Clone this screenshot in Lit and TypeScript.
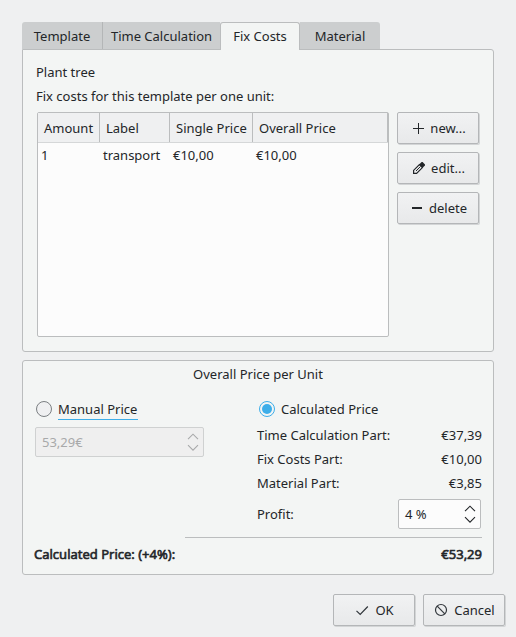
import { LitElement, html, css, svg } from "lit";
import { customElement, state } from "lit/decorators.js";
import { classMap } from "lit/directives/class-map.js";

const icons = {
  plus: svg`<path d="M8.5 3v11M3 8.5h11" stroke="#232629" />`,
  pencil: svg`<path d="M2.6 13.4V10.4L8.4 4.6L11.4 7.6L5.6 13.4Z" fill="none" stroke="#232629" stroke-width="1.2"/><path d="M5 11L9.4 6.6" stroke="#232629" stroke-width="1"/><path d="M8.2 4.4L10.6 2H11.6L14 4.4V5.4L11.6 7.8Z" fill="#232629"/>`,
  minus: svg`<path d="M3 8h10" stroke="#232629" stroke-width="2" />`,
  check: svg`<path d="M2.5 8.8l3.7 3.7L13.8 4.5" fill="none" stroke="#31363b" stroke-width="1.2" />`,
  cancel: svg`<circle cx="8" cy="8" r="5.5" fill="none" stroke="#31363b" stroke-width="1.2"/><path d="M4.2 4.2l7.6 7.6" stroke="#31363b" stroke-width="1.2"/>`,
};

const icon = (name: keyof typeof icons) =>
  html`<svg width="16" height="16" viewBox="0 0 16 16">${icons[name]}</svg>`;

@customElement("spin-box")
class SpinBox extends LitElement {
  static properties = { value: {}, disabled: { type: Boolean, reflect: true } };
  declare value: string;
  declare disabled: boolean;
  static styles = css`
    :host {
      box-sizing: border-box;
      display: flex;
      align-items: center;
      justify-content: space-between;
      height: 30px;
      padding: 0 4px 0 6px;
      border: 1px solid #bbbdbe;
      border-radius: 2px;
      background: #fcfcfc;
      color: #232629;
    }
    :host([disabled]) {
      background: #efefef;
      border-color: #cfd1d1;
      color: #a8a9aa;
    }
    svg {
      display: block;
      fill: none;
      stroke: currentColor;
      stroke-width: 1.1;
    }
  `;
  render() {
    return html`<span>${this.value}</span>
      <svg width="12" height="20" viewBox="0 0 12 20">
        <path d="M1 7.2l5-5 5 5M1 13.2l5 5 5-5" />
      </svg>`;
  }
}

@customElement("app-root")
class AppRoot extends LitElement {
  @state() private tab = "Fix Costs";
  @state() private mode = "calculated";

  static styles = css`
    :host {
      display: block;
      box-sizing: border-box;
      width: 516px;
      height: 637px;
      padding: 22px 22px 0;
      background: #eff0f1;
      color: #232629;
      font: 13px/18px "Noto Sans", sans-serif;
      overflow: hidden;
      white-space: nowrap;
    }
    * {
      box-sizing: border-box;
    }
    svg {
      display: block;
      flex: none;
    }
    .tabs {
      display: flex;
      height: 28px;
    }
    .tab {
      height: 27px;
      padding-top: 5px;
      text-align: center;
      background: #cccecf;
      border-left: 1px solid #b4b6b7;
    }
    .tab:first-child {
      border-left: 0;
      border-top-left-radius: 3px;
    }
    .tab:last-child {
      border-left: 0;
      border-top-right-radius: 3px;
    }
    .tab.active {
      height: 28px;
      padding-top: 4px;
      background: #f3f5f4;
      border: 1px solid #bbbdbe;
      border-bottom: 0;
      border-radius: 3px 3px 0 0;
      z-index: 1;
    }
    .t0 { width: 80px; }
    .t1 { width: 118px; }
    .t2 { width: 80px; }
    .t3 { width: 80px; }
    .panel {
      width: 472px;
      border: 1px solid #bbbdbe;
      border-radius: 3px;
      background: #f3f5f4;
    }
    .costs {
      height: 303px;
      margin-top: -1px;
      padding: 13px 14px 0 14px;
      border-top-left-radius: 0;
    }
    .line {
      height: 24px;
      margin-left: -1px;
    }
    .row {
      display: flex;
      gap: 8px;
      margin-top: 1px;
    }
    .table {
      width: 352px;
      height: 225px;
      border: 1px solid #bbbdbe;
      border-radius: 2px;
      background: #fcfcfc;
    }
    .grid {
      display: grid;
      grid-template-columns: 62px 70px 83px 1fr;
    }
    .head {
      height: 30px;
      background: #eff0f1;
      border-bottom: 1px solid #d5d7d8;
    }
    .head span {
      padding: 6px 0 0 6px;
      border-right: 1px solid #bbbdbe;
    }
    .body span {
      padding: 3px 0 0 3px;
    }
    .buttons {
      display: grid;
      gap: 8px;
      align-content: start;
    }
    .btn {
      display: flex;
      align-items: center;
      justify-content: center;
      gap: 5px;
      width: 82px;
      height: 32px;
      border: 1px solid #b4b6b8;
      border-radius: 2px;
      background: linear-gradient(#f1f2f3, #e8e9ea);
      box-shadow: 1px 1px 0 #d3d5d6;
    }
    .buttons .btn {
      gap: 4px;
    }
    .price {
      height: 215px;
      margin-top: 8px;
      padding: 4px 11px 0;
    }
    .title {
      text-align: center;
      height: 35px;
    }
    .cols {
      display: flex;
      justify-content: space-between;
    }
    .manual {
      width: 170px;
      padding-left: 1px;
    }
    .calc {
      width: 225px;
    }
    .option {
      display: flex;
      align-items: center;
      gap: 6px;
      height: 18px;
    }
    .option .focus {
      width: 80px;
      height: 20px;
      margin-top: 2px;
      border-bottom: 1px solid #3daee9;
    }
    .manual .option {
      padding-left: 1px;
    }
    .calc .option {
      padding-left: 2px;
    }
    .manual spin-box {
      margin-top: 9px;
      width: 169px;
    }
    .item {
      display: flex;
      justify-content: space-between;
      height: 24px;
    }
    .items {
      padding-top: 8px;
    }
    .profit {
      display: flex;
      align-items: center;
      justify-content: space-between;
      height: 30px;
      margin-top: 1px;
      padding-right: 1px;
    }
    .profit spin-box {
      width: 83px;
    }
    .rule {
      height: 1px;
      margin: 8px 0 0 151px;
      background: #bbbdbe;
    }
    .total {
      display: flex;
      justify-content: space-between;
      margin-top: 7px;
      -webkit-text-stroke: 0.6px #232629;
    }
    .footer {
      display: flex;
      justify-content: flex-end;
      gap: 8px;
      margin: 19px -11px 0 0;
    }
  `;

  private radio(on: boolean) {
    return html`<svg width="16" height="16" viewBox="0 0 16 16">
      <circle cx="8" cy="8" r="7.5" fill=${on ? "#f3f5f4" : "#eff0f1"} stroke=${on ? "#3daee9" : "#7b7f82"} />
      ${on ? svg`<circle cx="8" cy="8" r="5" fill="#3daee9" />` : ""}
    </svg>`;
  }

  render() {
    const manual = this.mode === "manual";
    return html`
      <div class="tabs">
        ${["Template", "Time Calculation", "Fix Costs", "Material"].map(
          (t, i) => html`<div
            class=${classMap({ tab: true, ["t" + i]: true, active: t === this.tab })}
            @click=${() => (this.tab = t)}
          >${t}</div>`
        )}
      </div>
      <div class="panel costs">
        <div class="line">Plant tree</div>
        <div class="line">Fix costs for this template per one unit:</div>
        <div class="row">
          <div class="table">
            <div class="grid head">
              <span>Amount</span><span>Label</span><span>Single Price</span><span>Overall Price</span>
            </div>
            <div class="grid body">
              <span>1</span><span>transport</span><span>€10,00</span><span>€10,00</span>
            </div>
          </div>
          <div class="buttons">
            <div class="btn">${icon("plus")}new...</div>
            <div class="btn">${icon("pencil")}edit...</div>
            <div class="btn">${icon("minus")}delete</div>
          </div>
        </div>
      </div>
      <div class="panel price">
        <div class="title">Overall Price per Unit</div>
        <div class="cols">
          <div class="manual">
            <div class="option" @click=${() => (this.mode = "manual")}>
              ${this.radio(manual)}<span class="focus">Manual Price</span>
            </div>
            <spin-box .value=${"53,29€"} ?disabled=${!manual}></spin-box>
          </div>
          <div class="calc">
            <div class="option" @click=${() => (this.mode = "calculated")}>
              ${this.radio(!manual)}<span>Calculated Price</span>
            </div>
            <div class="items">
              <div class="item"><span>Time Calculation Part:</span><span>€37,39</span></div>
              <div class="item"><span>Fix Costs Part:</span><span>€10,00</span></div>
              <div class="item"><span>Material Part:</span><span>€3,85</span></div>
            </div>
            <div class="profit"><span>Profit:</span><spin-box .value=${"4 %"}></spin-box></div>
          </div>
        </div>
        <div class="rule"></div>
        <div class="total"><span>Calculated Price: (+4%):</span><span>€53,29</span></div>
      </div>
      <div class="footer">
        <div class="btn">${icon("check")}OK</div>
        <div class="btn">${icon("cancel")}Cancel</div>
      </div>
    `;
  }
}
